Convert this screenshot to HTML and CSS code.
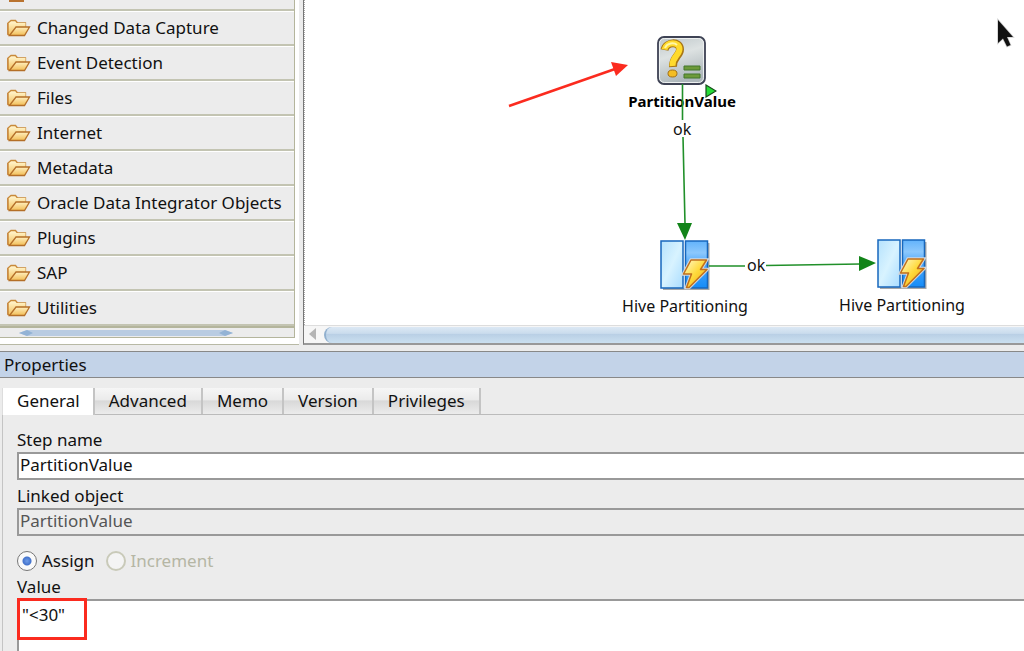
FILE: index.html
```
<!DOCTYPE html>
<html lang="en">
<head>
  <meta charset="UTF-8" />
  <title>Package Editor</title>
  <link rel="stylesheet" href="styles.css">
</head>
<body>

  <!-- shared icons -->
  <svg class="defs" width="0" height="0" aria-hidden="true">
    <defs>
      <linearGradient id="folder-fill" x1="0" y1="0" x2="0" y2="1">
        <stop offset="0" stop-color="#fff0c0" />
        <stop offset="1" stop-color="#f2bd55" />
      </linearGradient>
      <linearGradient id="pane-light" x1="0" y1="0" x2="1" y2="1">
        <stop offset="0" stop-color="#b5e2fd" />
        <stop offset="0.5" stop-color="#d8f3ff" />
        <stop offset="1" stop-color="#a9dcff" />
      </linearGradient>
      <linearGradient id="pane-dark" x1="0" y1="0" x2="0" y2="1">
        <stop offset="0" stop-color="#62b3fb" />
        <stop offset="0.25" stop-color="#8cc8fc" />
        <stop offset="0.5" stop-color="#4ca6fa" />
        <stop offset="1" stop-color="#148cf8" />
      </linearGradient>
      <linearGradient id="bolt-fill" x1="0" y1="0" x2="1" y2="1">
        <stop offset="0" stop-color="#fffbd0" />
        <stop offset="0.5" stop-color="#ffd93a" />
        <stop offset="1" stop-color="#eca315" />
      </linearGradient>
      <linearGradient id="var-fill" x1="0" y1="0" x2="0.3" y2="1">
        <stop offset="0" stop-color="#bcc5c8" />
        <stop offset="0.45" stop-color="#dde2e2" />
        <stop offset="1" stop-color="#adb7bb" />
      </linearGradient>
      <symbol id="folder" viewBox="0 0 24 18">
        <path d="M1 15.500V4L4 1.500H8.500L10.500 4H18.500V8" fill="#fff0c4" stroke="#c88a3a" stroke-width="1.300" />
        <path d="M1 4V15L3 16.500L8 8H18.500V4Z" fill="url(#folder-fill)" />
        <path d="M1 4V15.500L3 16.500" fill="none" stroke="#c07b2e" stroke-width="1.300" />
        <path d="M2.500 16.500L9 8H22.500L17.500 16.500Z" fill="url(#folder-fill)" stroke="#b46f28" stroke-width="1.300" />
      </symbol>
      <symbol id="hive" viewBox="0 0 50 50">
        <path d="M3 49H48.500V3" fill="none" stroke="#a8a8a8" stroke-width="2" />
        <rect x="1" y="1" width="22" height="47" fill="url(#pane-light)" stroke="#1767bd" stroke-width="1.500" />
        <rect x="25.500" y="1" width="22" height="47" fill="url(#pane-dark)" stroke="#1767bd" stroke-width="1.500" />
        <path d="M31 20H46.500L40.500 29.500H47L29 47.500H26.500L31.500 34H23.500Z" fill="none" stroke="#cfd8e0" stroke-width="3.500" />
        <path d="M31 20H46.500L40.500 29.500H47L29 47.500H26.500L31.500 34H23.500Z" fill="url(#bolt-fill)" stroke="#c16f1c" stroke-width="1.500" stroke-linejoin="round" />
      </symbol>
    </defs>
  </svg>

  <main class="workspace">
    <nav class="toolbox">
      <div class="toolbox-list">
        <div class="toolbox-row toolbox-cut"><span></span></div>
        <button class="toolbox-row"><svg class="folder"><use href="#folder" /></svg>Changed Data Capture</button>
        <button class="toolbox-row"><svg class="folder"><use href="#folder" /></svg>Event Detection</button>
        <button class="toolbox-row"><svg class="folder"><use href="#folder" /></svg>Files</button>
        <button class="toolbox-row"><svg class="folder"><use href="#folder" /></svg>Internet</button>
        <button class="toolbox-row"><svg class="folder"><use href="#folder" /></svg>Metadata</button>
        <button class="toolbox-row"><svg class="folder"><use href="#folder" /></svg>Oracle Data Integrator Objects</button>
        <button class="toolbox-row"><svg class="folder"><use href="#folder" /></svg>Plugins</button>
        <button class="toolbox-row"><svg class="folder"><use href="#folder" /></svg>SAP</button>
        <button class="toolbox-row"><svg class="folder"><use href="#folder" /></svg>Utilities</button>
        <div class="toolbox-scroll">
          <svg width="214" height="6" viewBox="0 0 214 6">
            <path d="M0 3L8 0H206L214 3L206 6H8Z" fill="#b9cce2" />
            <path d="M0 3L8 0L14 3L8 6ZM214 3L206 0L200 3L206 6Z" fill="#93b3d5" />
          </svg>
        </div>
      </div>
    </nav>

    <section class="diagram">
      <div class="canvas">
        <div class="node node-variable">
          <svg width="50" height="50" viewBox="0 0 50 50">
            <rect x="1" y="1" width="47" height="47" rx="6" fill="url(#var-fill)" stroke="#3f4355" stroke-width="1.800" />
            <rect x="2.500" y="2.500" width="44" height="44" rx="5" fill="none" stroke="#edf0f0" stroke-width="1" />
            <path d="M7.500 14C9 5.500 23 5 23 13.500C23 20 15.500 21 16 31" fill="none" stroke="#a87616" stroke-width="8" />
            <path d="M7.500 13.500C9 5.500 22.500 5 22.500 13C22.500 19.500 15 20.500 15.500 30" fill="none" stroke="#ffda2c" stroke-width="6" />
            <path d="M8 12C10 7 17 6 20 9" fill="none" stroke="#fff6a5" stroke-width="2" />
            <ellipse cx="15.500" cy="37.500" rx="4.500" ry="3.500" fill="#f4bd24" stroke="#a36f15" />
            <path d="M27 30H43V34H27ZM27 38H43V42H27Z" fill="#6d9a3a" stroke="#42762a" />
          </svg>
          <strong>PartitionValue</strong>
          <svg class="start" width="12" height="14" viewBox="0 0 12 14">
            <path d="M1 1L11 7L1 13Z" fill="#27dc37" stroke="#174b1b" stroke-width="1.200" />
          </svg>
        </div>

        <div class="node node-hive-a">
          <svg width="50" height="50"><use href="#hive" /></svg>
          <span>Hive Partitioning</span>
        </div>

        <div class="node node-hive-b">
          <svg width="50" height="50"><use href="#hive" /></svg>
          <span>Hive Partitioning</span>
        </div>

        <svg class="links" width="719" height="325" viewBox="305 0 719 325">
          <g stroke="#21902a" stroke-width="1.600" fill="none">
            <path d="M682.500 84V120M683 137L685 224" />
            <path d="M709 266H745M766 265.500L860 264" />
          </g>
          <path d="M677 223H692L685 240ZM859 256V271L876 263Z" fill="#128419" />
          <path d="M509 106L615 69" stroke="#fb2b1f" stroke-width="2.500" />
          <path d="M611 62L628 65L616 76Z" fill="#fb2b1f" />
          <path d="M998 20V43L1003 38.500L1007 46.500L1010.500 45L1007 37H1013Z" fill="#111" stroke="#ccc" stroke-width="1.500" paint-order="stroke" />
        </svg>

        <span class="link-label label-down">ok</span>
        <span class="link-label label-right">ok</span>
      </div>
      <div class="scrollbar">
        <svg width="20" height="18" viewBox="0 0 20 18"><path d="M12 2V14L5 8Z" fill="#b4b4b4" /></svg>
        <div class="thumb"></div>
      </div>
    </section>
  </main>

  <section class="properties">
    <h2>Properties</h2>
    <div class="tabs" role="tablist">
      <button class="tab active" role="tab" aria-selected="true">General</button>
      <button class="tab" role="tab">Advanced</button>
      <button class="tab" role="tab">Memo</button>
      <button class="tab" role="tab">Version</button>
      <button class="tab" role="tab">Privileges</button>
    </div>

    <form class="general">
      <label for="step-name">Step name</label>
      <input type="text" id="step-name" value="PartitionValue" />
      <label for="linked-object">Linked object</label>
      <input type="text" id="linked-object" value="PartitionValue" disabled />
      <div class="mode">
        <input type="radio" name="mode" id="assign" checked />
        <label for="assign">Assign</label>
        <input type="radio" name="mode" id="increment" disabled />
        <label for="increment">Increment</label>
      </div>
      <label for="value">Value</label>
      <div class="value-box">
        <textarea id="value">"&lt;30"</textarea>
        <div class="highlight"></div>
      </div>
    </form>
  </section>

</body>
</html>
```
FILE: styles.css
```
* { box-sizing: border-box; }
body {
  margin: 0; height: 100vh; display: flex; flex-direction: column; overflow: hidden;
  background: #ececec; color: #111; font-family: "Noto Sans", sans-serif; font-size: 17px; line-height: 24px;
}
button, input, textarea { font: inherit; color: inherit; }
svg { display: block; }
.defs { position: absolute; }

/* top half: toolbox and diagram */
.workspace { display: flex; flex: none; }
.toolbox { width: 299px; flex: none; margin-right: 4px; background: #fff; border-bottom: 1px solid #b8b9a5; }
.toolbox-list { width: 295px; background: #ececec; border-right: 1px solid #b4b59c; }
.toolbox-row {
  display: flex; align-items: center; gap: 6px; width: 100%; height: 35px; padding: 0 0 0 7px;
  background: #ececec; border: none; border-top: 1px solid #fff; border-bottom: 2px solid #c3c4b2; text-align: left; white-space: nowrap;
}
.toolbox-cut { height: 11px; align-items: flex-start; border-top: none; }
.toolbox-cut span { width: 15px; height: 2px; margin-left: 2px; background: #b9732f; }
.folder { width: 24px; height: 18px; flex: none; }
.toolbox-scroll { height: 12px; padding: 2px 0 0 19px; border-top: 2px solid #b4b59c; border-bottom: 1px solid #b4b59c; }

.diagram { flex: 1; min-width: 0; display: flex; flex-direction: column; border-left: 1px solid #777; border-bottom: 2px solid #999; }
.canvas { position: relative; height: 325px; overflow: hidden; background: #fff; border-left: 1px dotted #aaa; }
.links { position: absolute; top: 0; left: 0; }
.node { position: absolute; display: flex; flex-direction: column; align-items: center; width: 130px; font-size: 16px; white-space: nowrap; }
.node-variable { left: 312px; top: 36px; font-size: 15px; }
.node-variable strong { margin-top: 3px; color: #000; }
.node-hive-a { left: 315px; top: 240px; }
.node-hive-b { left: 532px; top: 239px; }
.node span { margin-top: 4px; }
.start { position: absolute; left: 88px; top: 48px; }
.link-label { position: absolute; font-size: 16px; }
.label-down { left: 368px; top: 117px; }
.label-right { left: 442px; top: 253px; }
.scrollbar { display: flex; height: 18px; background: #f6f6f6; border-top: 1px solid #ddd; }
.thumb { flex: 1; margin-top: 1px; border-radius: 8px 0 0 8px; background: linear-gradient(#dce8f4, #cadced 40%, #b9cfe5 45%, #cbe0f0); border-left: 2px solid #91b0cf; }

/* properties panel */
.properties { display: flex; flex-direction: column; flex: 1; margin-top: 6px; min-height: 0; }
.properties h2 {
  margin: 0; padding: 0 4px; height: 27px; font-size: 17px; font-weight: normal; line-height: 25px;
  background: #c3d3e8; border-top: 1px solid #888; border-bottom: 1px solid #888;
}
.tabs { display: flex; margin: 10px 0 0 2px; border-bottom: 1px solid #bbb; }
.tab {
  height: 26px; padding: 0 14px; border: none; border-right: 2px solid #c4c4c4; line-height: 24px;
  background: linear-gradient(#f6f6f6, #ebebeb 45%, #d8d8d8 50%, #ececec);
}
.tab.active { margin-bottom: -1px; height: 27px; padding: 0 13px 2px 14px; background: #fff; border-left: 1px solid #ddd; }
.general { display: flex; flex-direction: column; flex: 1; margin-left: 2px; padding: 13px 0 0 14px; border-left: 1px solid #c4c4c4; }
.general input[type="text"] { width: 100%; height: 28px; margin-bottom: 4px; padding: 0 1px 3px; background: #fff; border: 2px solid #999; border-right: none; }
.general input[type="text"]:disabled { color: #555; background: #ececec; }
.mode { display: flex; align-items: center; height: 36px; padding-top: 8px; margin-top: -1px; }
.mode input {
  appearance: none; width: 20px; height: 20px; margin: 0 5px 0 0; border: 1px solid #777; border-radius: 50%;
  background: #fafafa;
}
.mode input:checked { background: radial-gradient(circle, #6f9de8 0, #4473cc 4px, #fafafa 5px); }
.mode input:disabled { border: 2px solid #c9cab9; background: #f4f4f4; }
.mode label { margin-right: 11px; }
.mode input:disabled + label { color: #b5b6a4; }
.value-box { position: relative; flex: 1; display: flex; }
.value-box textarea { flex: 1; padding: 2px 3px; border: 2px solid #999; border-right: none; border-bottom: none; background: #fff; resize: none; overflow: hidden; }
.highlight { position: absolute; left: 0; top: -1px; width: 70px; height: 42px; border: 3px solid #fb2b1f; pointer-events: none; }
```
